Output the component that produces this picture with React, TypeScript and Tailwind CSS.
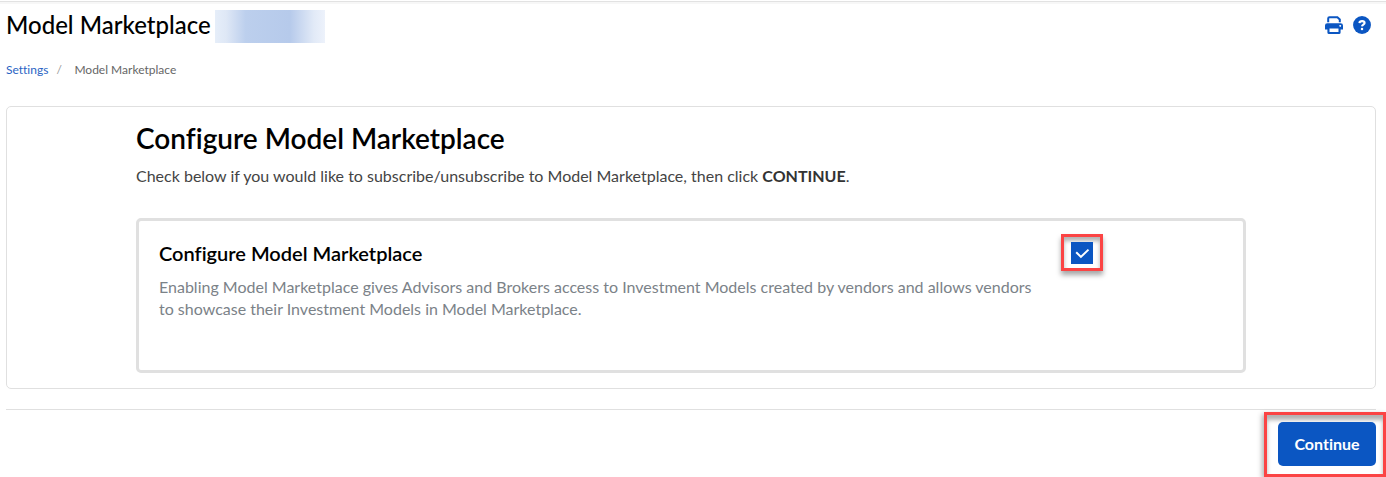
import { useState } from "react";

function PrinterIcon() {
  return (
    <svg viewBox="0 0 18 18" className="h-[18px] w-[18px]" fill="none" aria-hidden="true">
      <path d="M3.2 6.200V2.500Q3.200 1.200 4.500 1.200H12.400L14.800 3.400V6.200" stroke="currentColor" strokeWidth="2" />
      <path
        fill="currentColor"
        fillRule="evenodd"
        d="M2.3 7.2H15.7Q18 7.2 18 9.5V13.4H15.6V16.4Q15.6 18 14 18H4Q2.4 18 2.4 16.4V13.4H0V9.5Q0 7.2 2.3 7.2ZM4.5 12.6H13.5V15.9H4.5ZM15.2 9a.9.9 0 1 0 .01 0Z"
      />
    </svg>
  );
}

function HelpIcon() {
  return (
    <svg viewBox="0 0 512 512" className="h-[18px] w-[18px]" aria-hidden="true">
      <circle cx="256" cy="256" r="254" fill="currentColor" />
      <path
        d="M182 200C190 132 326 126 330 200C330 248 258 244 256 296"
        fill="none"
        stroke="white"
        strokeWidth="60"
      />
      <circle cx="256" cy="368" r="36" fill="white" />
    </svg>
  );
}

export default function App() {
  const [enabled, setEnabled] = useState(true);

  return (
    <div className="bg-white pt-px font-['Lato','Liberation_Sans',sans-serif] text-[#444] [font-variant-ligatures:none]">
      <div className="h-[3px] border-t border-[#e2e2e2] bg-[#f7f7f7]" />
      <header className="flex items-center justify-between pt-[5px] pr-[15px] pl-[6px]">
        <div className="flex items-center gap-1">
          <h1 className="pb-[2px] text-[24px] leading-8 font-medium text-black">Model Marketplace</h1>
          <div className="h-[33px] w-[110px] bg-[linear-gradient(90deg,#e6eef9_0%,#dfe8f6_10%,#bccfed_28%,#b6caeb_68%,#e2eaf7_90%,#edf2fb_100%)]" />
        </div>
        <div className="flex gap-[10px] pb-[2px] text-[#0b56c2]">
          <button type="button" aria-label="Print">
            <PrinterIcon />
          </button>
          <button type="button" aria-label="Help">
            <HelpIcon />
          </button>
        </div>
      </header>

      <nav aria-label="Breadcrumb" className="mt-[19px] flex pl-[6px] text-[12px] leading-4">
        <a href="#settings" className="text-[#2a63c4]">
          Settings
        </a>
        <span className="w-[26px] pl-2 text-[#999]">/</span>
        <span className="text-[#666]">Model Marketplace</span>
      </nav>

      <main className="pr-[10px] pl-[6px]">
        <section className="mt-7 rounded-[5px] border border-[#e0e0e0] px-[129px] pt-[13px] pb-[15px]">
          <h2 className="text-[28px] leading-9 font-semibold text-black">Configure Model Marketplace</h2>
          <p className="mt-2 text-[16px] leading-6">
            Check below if you would like to subscribe/unsubscribe to Model Marketplace, then click{" "}
            <strong className="font-bold text-[#333]">CONTINUE</strong>.
          </p>
          <div className="mt-[30px] flex min-h-[155px] items-start rounded-[5px] border-3 border-[#e0e0e0] pt-[13px] pl-5">
            <div className="flex-1 pt-[5px] pr-6">
              <h3 className="text-[20px] leading-7 font-semibold text-black">
                <label htmlFor="configure">Configure Model Marketplace</label>
              </h3>
              <p id="configure-help" className="mt-[9px] text-[16px] leading-[22px] text-[#7b8288]">
                Enabling Model Marketplace gives Advisors and Brokers access to Investment Models created by vendors and
                allows vendors to showcase their Investment Models in Model Marketplace.
              </p>
            </div>
            <div className="w-[182px]">
              <div className="relative flex h-[37px] w-[42px] items-center justify-center border-3 border-[#fb4444] shadow-[inset_0_4px_4px_rgba(0,0,0,0.3),0_4px_5px_rgba(0,0,0,0.35)]">
                <input
                  id="configure"
                  type="checkbox"
                  aria-describedby="configure-help"
                  checked={enabled}
                  onChange={(e) => setEnabled(e.target.checked)}
                  className="peer h-[22px] w-[22px] appearance-none border border-[#0b56c2] bg-white checked:bg-[#0b56c2]"
                />
                <svg
                  viewBox="0 0 22 22"
                  className="pointer-events-none invisible absolute h-[22px] w-[22px] peer-checked:visible"
                  fill="none"
                  aria-hidden="true"
                >
                  <path d="M5.200 10.200L9.900 14.900L17.500 7.600" stroke="white" strokeWidth="2" />
                </svg>
              </div>
            </div>
          </div>
        </section>
        <hr className="mt-5 border-[#e0e0e0]" />
      </main>

      <footer className="mt-[2px] flex justify-end">
        <div className="border-3 border-[#fb4444] pt-[7px] pr-[7px] pb-2 pl-[11px] shadow-[inset_0_5px_4px_rgba(0,0,0,0.3),-2px_2px_5px_rgba(0,0,0,0.3)]">
          <button
            type="button"
            className="h-11 w-[98px] rounded-[5px] bg-[#0b56c2] text-[16px] font-bold text-white"
          >
            Continue
          </button>
        </div>
      </footer>
    </div>
  );
}
